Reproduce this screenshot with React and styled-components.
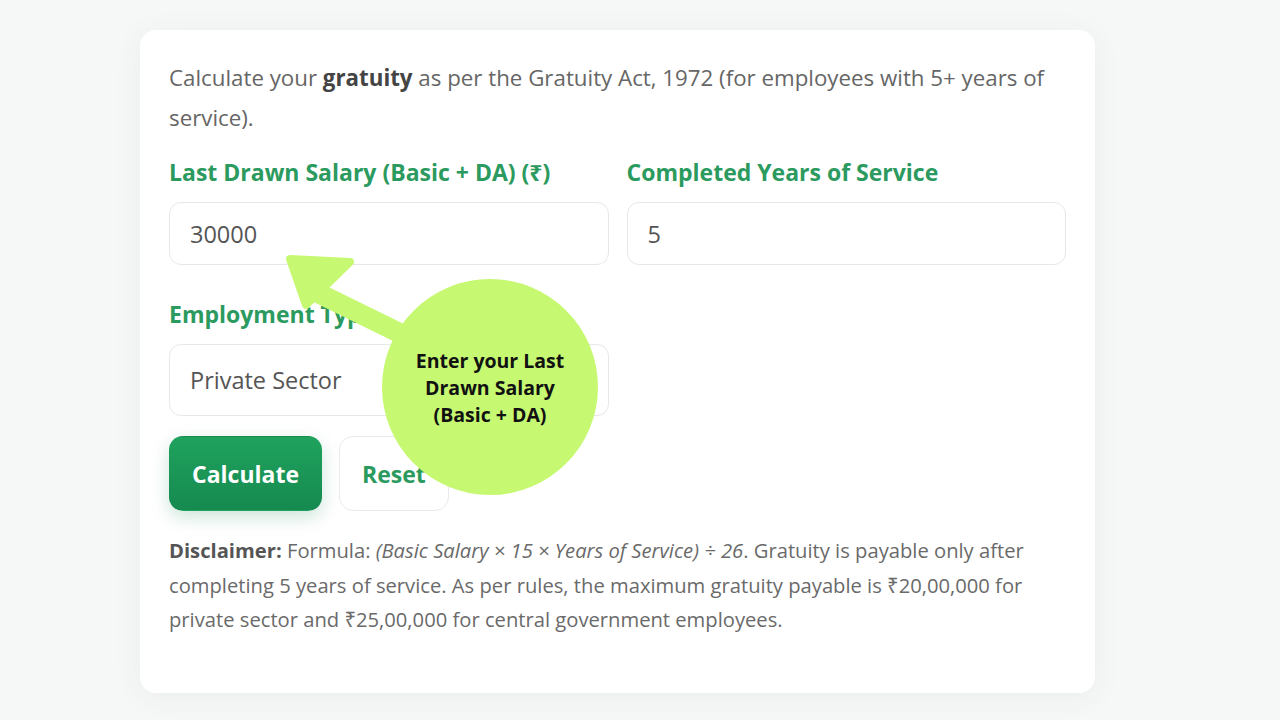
import React, { useState } from "react";
import styled, { createGlobalStyle } from "styled-components";

const GlobalStyle = createGlobalStyle`
  html, body {
    margin: 0;
    padding: 0;
    background: #f6f8f8;
    font-family: "Open Sans", "Noto Sans", sans-serif;
  }
`;

const Page = styled.div`
  width: 1280px;
  height: 720px;
  padding: 30px 0 0 140px;
  box-sizing: border-box;
`;

const Card = styled.div`
  position: relative;
  width: 955px;
  min-height: 663px;
  box-sizing: border-box;
  background: #ffffff;
  border-radius: 16px;
  padding: 28px 29px 40px 29px;
  box-shadow: 0 4px 30px rgba(20, 60, 40, 0.06);
`;

const Intro = styled.p`
  margin: 0;
  font-size: 22.3px;
  line-height: 40px;
  color: #666;

  strong {
    color: #444;
    font-weight: 700;
  }
`;

const Grid = styled.div`
  display: grid;
  grid-template-columns: 1fr 1fr;
  column-gap: 18px;
  row-gap: 35px;
  margin-top: 20px;
`;

const Field = styled.div`
  display: flex;
  flex-direction: column;
`;

const Label = styled.label`
  font-size: 23px;
  line-height: 28px;
  font-weight: 700;
  color: #2b9a5e;
  margin-bottom: 16px;
`;

const Input = styled.input`
  height: 63px;
  box-sizing: border-box;
  border: 1px solid #e6e8e7;
  border-radius: 12px;
  padding: 0 20px;
  font-family: inherit;
  font-size: 23.5px;
  color: #555;
  background: #fff;
  outline: none;
`;

const Select = styled.div`
  height: 72px;
  box-sizing: border-box;
  border: 1px solid #e6e8e7;
  border-radius: 12px;
  padding: 0 20px;
  display: flex;
  align-items: center;
  font-size: 23.5px;
  color: #555;
`;

const Buttons = styled.div`
  display: flex;
  gap: 17px;
  margin-top: 20px;
`;

const Button = styled.button`
  height: 75px;
  padding: 0 22px;
  border-radius: 14px;
  font-family: inherit;
  font-size: 23px;
  font-weight: 700;
  cursor: pointer;
  border: 1px solid ${(p) => (p.$primary ? "transparent" : "#e8ebea")};
  color: ${(p) => (p.$primary ? "#fff" : "#2b9a5e")};
  background: ${(p) =>
    p.$primary ? "linear-gradient(180deg, #1fa25d 0%, #168a50 100%)" : "#fff"};
  box-shadow: ${(p) => (p.$primary ? "0 6px 18px rgba(22, 138, 80, 0.22)" : "none")};
`;

const Disclaimer = styled.p`
  margin: 22px 0 0 0;
  font-size: 20.2px;
  line-height: 34.5px;
  color: #6a6a6a;

  strong {
    color: #555;
  }
`;

const Overlay = styled.svg`
  position: absolute;
  left: 0;
  top: 0;
  width: 100%;
  height: 100%;
  pointer-events: none;
`;

const Bubble = styled.div`
  position: absolute;
  left: 242px;
  top: 249px;
  width: 216px;
  height: 216px;
  border-radius: 50%;
  background: #c6f872;
  display: flex;
  align-items: center;
  justify-content: center;
  text-align: center;
  font-size: 19.5px;
  line-height: 27px;
  font-weight: 700;
  color: #111;
`;

export default function App() {
  const [salary, setSalary] = useState("30000");
  const [years, setYears] = useState("5");

  return (
    <>
      <GlobalStyle />
      <Page>
        <Card>
          <Intro>
            Calculate your <strong>gratuity</strong> as per the Gratuity Act, 1972 (for employees with 5+ years of service).
          </Intro>
          <Grid>
            <Field>
              <Label>Last Drawn Salary (Basic + DA) (₹)</Label>
              <Input value={salary} onChange={(e) => setSalary(e.target.value)} />
            </Field>
            <Field>
              <Label>Completed Years of Service</Label>
              <Input value={years} onChange={(e) => setYears(e.target.value)} />
            </Field>
            <Field>
              <Label>Employment Type</Label>
              <Select>Private Sector</Select>
            </Field>
          </Grid>
          <Buttons>
            <Button $primary>Calculate</Button>
            <Button>Reset</Button>
          </Buttons>
          <Disclaimer>
            <strong>Disclaimer:</strong> Formula: <em>(Basic Salary × 15 × Years of Service) ÷ 26</em>. Gratuity is payable only after completing 5 years of service. As per rules, the maximum gratuity payable is ₹20,00,000 for private sector and ₹25,00,000 for central government employees.
          </Disclaimer>

          <Overlay viewBox="0 0 955 663">
            <line x1="176" y1="262" x2="290" y2="318" stroke="#c6f872" strokeWidth="20" />
            <polygon
              points="150,229 210,232 166,275"
              fill="#c6f872"
              stroke="#c6f872"
              strokeWidth="8"
              strokeLinejoin="round"
            />
          </Overlay>
          <Bubble>
            Enter your Last
            <br />
            Drawn Salary
            <br />
            (Basic + DA)
          </Bubble>
        </Card>
      </Page>
    </>
  );
}
